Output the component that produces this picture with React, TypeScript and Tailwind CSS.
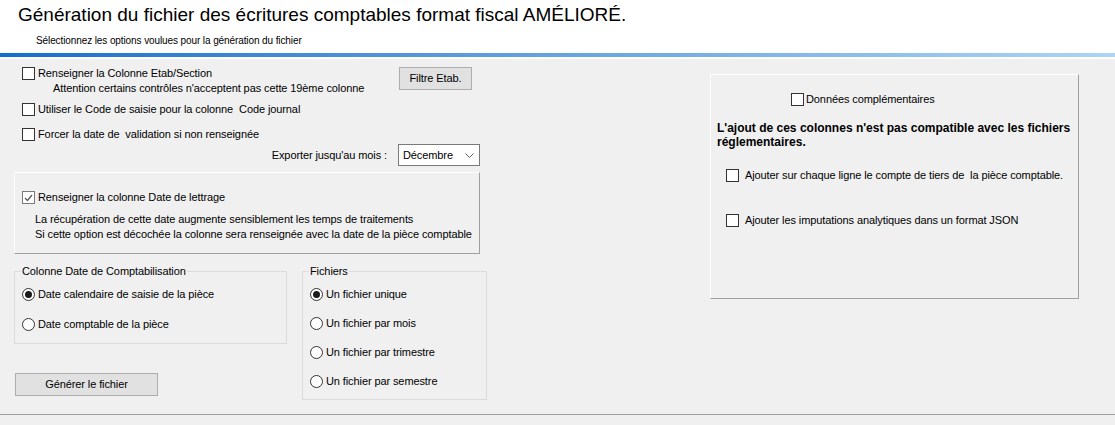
import React from "react";

function Check({ checked = false }: { checked?: boolean }) {
  return (
    <span
      className={
        "w-[13px] h-[13px] shrink-0 bg-white border flex items-center justify-center " +
        (checked ? "border-[#7a7a7a]" : "border-[#333333]")
      }
    >
      {checked && (
        <svg width="9" height="8" viewBox="0 0 9 8">
          <path d="M1 4 L3.5 6.5 L8 1" fill="none" stroke="#5a5a5a" strokeWidth="1.3" />
        </svg>
      )}
    </span>
  );
}

function Radio({ checked = false }: { checked?: boolean }) {
  return (
    <span className="w-[13px] h-[13px] shrink-0 rounded-full bg-white border border-[#333333] flex items-center justify-center">
      {checked && <span className="w-[7px] h-[7px] rounded-full bg-[#1a1a1a]" />}
    </span>
  );
}

function CheckRow({ label, checked, gap = "gap-[3px]" }: { label: string; checked?: boolean; gap?: string }) {
  return (
    <div className={"flex items-center whitespace-pre " + gap}>
      <Check checked={checked} />
      <span>{label}</span>
    </div>
  );
}

function RadioRow({ label, checked }: { label: string; checked?: boolean }) {
  return (
    <div className="flex items-center gap-[3px] whitespace-pre">
      <Radio checked={checked} />
      <span>{label}</span>
    </div>
  );
}

export default function App() {
  return (
    <div className="w-[1115px] h-[425px] overflow-hidden bg-[#f0f0f0] text-black text-[11px] leading-[13px] tracking-[-0.1px] font-['Liberation_Sans',Arial,sans-serif]">
      {/* header */}
      <div className="h-[53px] bg-white pt-[4px]">
        <div className="pl-[18px] text-[19px] leading-[22px] tracking-normal whitespace-nowrap">
          Génération du fichier des écritures comptables format fiscal AMÉLIORÉ.
        </div>
        <div className="pl-[36px] mt-[8px] text-[10px]">
          Sélectionnez les options voulues pour la génération du fichier
        </div>
      </div>
      <div className="h-[4px] bg-linear-to-r from-[#0e70cc] to-[#acd5f5]" />
      <div className="h-[2px] bg-white" />

      {/* body */}
      <div className="flex h-[355px]">
        <div className="ml-[14px] w-[466px] shrink-0 flex flex-col pt-[8px]">
          <div className="flex ml-[8px] items-start">
            <div className="w-[377px]">
              <CheckRow label="Renseigner la Colonne Etab/Section" />
              <div className="ml-[31px] mt-[2px] whitespace-nowrap">
                Attention certains contrôles n'acceptent pas cette 19ème colonne
              </div>
            </div>
            <button className="w-[73px] h-[23px] bg-[#e1e1e1] border border-[#adadad] flex items-center justify-center">
              Filtre Etab.
            </button>
          </div>

          <div className="ml-[8px] mt-[8px]">
            <CheckRow label="Utiliser le Code de saisie pour la colonne  Code journal" />
          </div>
          <div className="ml-[8px] mt-[12px]">
            <CheckRow label="Forcer la date de  validation si non renseignée" />
          </div>

          <div className="flex justify-end items-center mt-[3px]">
            <span>Exporter jusqu'au mois :</span>
            <div className="ml-[11px] w-[82px] h-[22px] bg-white border border-[#7a7a7a] flex items-center justify-between pl-[4px] pr-[5px]">
              <span>Décembre</span>
              <svg width="9" height="5" viewBox="0 0 9 5">
                <path d="M0.5 0.5 L4.5 4.5 L8.5 0.5" fill="none" stroke="#606060" strokeWidth="1" />
              </svg>
            </div>
          </div>

          {/* date de lettrage panel */}
          <div className="mt-[6px] h-[82px] border-t border-l border-t-white border-l-white border-r border-b border-r-[#a0a0a0] border-b-[#a0a0a0] pl-[7px] pt-[18px]">
            <CheckRow label="Renseigner la colonne Date de lettrage" checked />
            <div className="ml-[13px] mt-[8px] leading-[15px] whitespace-nowrap">
              <div>La récupération de cette date augmente sensiblement les temps de traitements</div>
              <div>Si cette option est décochée la colonne sera renseignée avec la date de la pièce comptable</div>
            </div>
          </div>

          {/* group boxes */}
          <div className="flex items-start mt-[17px]">
            <div className="w-[273px] shrink-0 flex flex-col">
              <div className="relative h-[73px] border border-[#dcdcdc] pl-[7px] pt-[16px] flex flex-col gap-[17px]">
                <span className="absolute -top-[7px] left-[6px] px-[1px] bg-[#f0f0f0] whitespace-nowrap">
                  Colonne Date de Comptabilisation
                </span>
                <RadioRow label="Date calendaire de saisie de la pièce" checked />
                <RadioRow label="Date comptable de la pièce" />
              </div>
              <button className="mt-[29px] ml-[1px] w-[143px] h-[23px] bg-[#e1e1e1] border border-[#adadad] flex items-center justify-center">
                Générer le fichier
              </button>
            </div>
            <div className="relative ml-[15px] w-[185px] h-[129px] shrink-0 border border-[#dcdcdc] pl-[7px] pt-[16px] flex flex-col gap-[16px]">
              <span className="absolute -top-[7px] left-[6px] px-[1px] bg-[#f0f0f0]">Fichiers</span>
              <RadioRow label="Un fichier unique" checked />
              <RadioRow label="Un fichier par mois" />
              <RadioRow label="Un fichier par trimestre" />
              <RadioRow label="Un fichier par semestre" />
            </div>
          </div>
        </div>

        {/* right panel */}
        <div className="ml-[230px] mt-[15px] w-[369px] h-[225px] shrink-0 border-t border-l border-t-white border-l-white border-r border-b border-r-[#a0a0a0] border-b-[#a0a0a0] pt-[18px]">
          <div className="ml-[80px]">
            <CheckRow label="Données complémentaires" gap="gap-[2px]" />
          </div>
          <div className="mt-[15px] pl-[6px] text-[12px] font-bold leading-[14px] tracking-normal whitespace-nowrap">
            L'ajout de ces colonnes n'est pas compatible avec les fichiers
            <br />
            réglementaires.
          </div>
          <div className="mt-[20px] pl-[15px]">
            <CheckRow label="Ajouter sur chaque ligne le compte de tiers de  la pièce comptable." gap="gap-[6px]" />
          </div>
          <div className="mt-[32px] pl-[15px]">
            <CheckRow label="Ajouter les imputations analytiques dans un format JSON" gap="gap-[6px]" />
          </div>
        </div>
      </div>

      <div className="h-px bg-[#a0a0a0]" />
    </div>
  );
}
